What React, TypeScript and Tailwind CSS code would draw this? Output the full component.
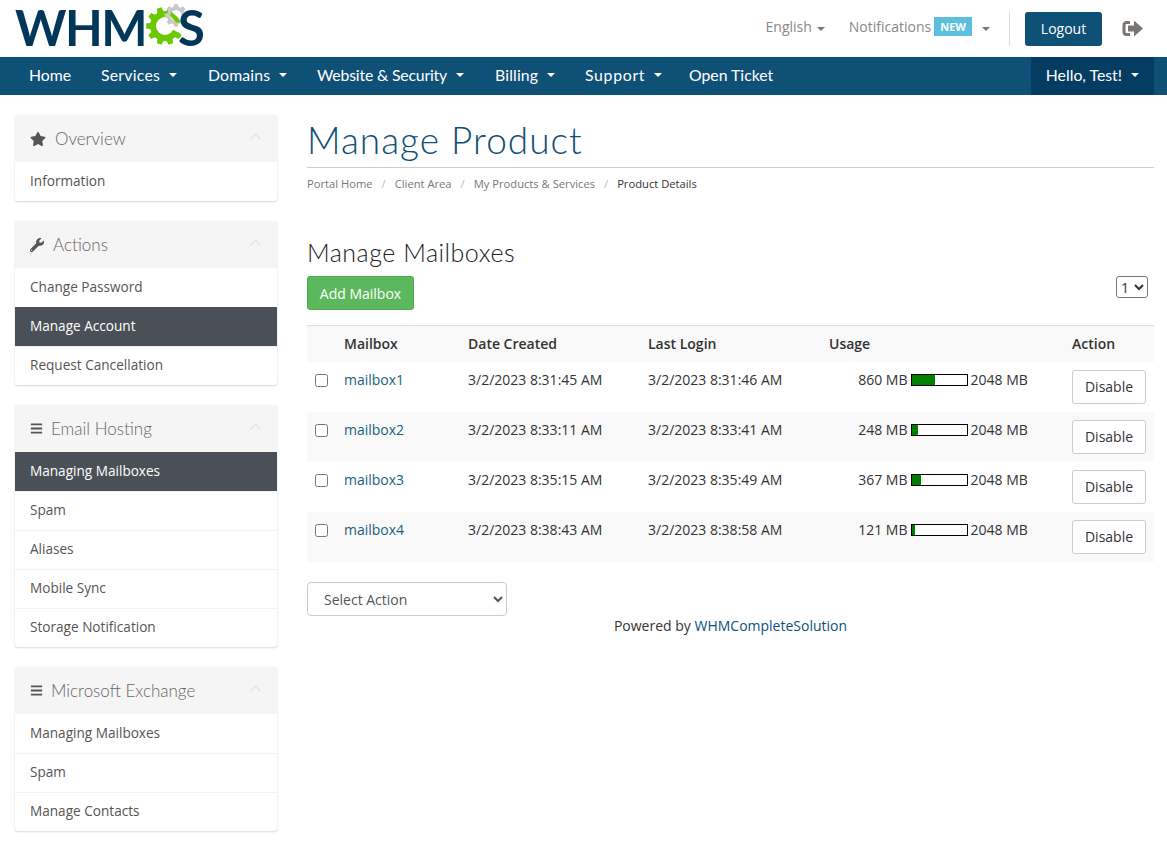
import React from 'react';
import { FaStar, FaWrench, FaBars, FaChevronUp } from 'react-icons/fa';

const gearPath = (cx: number, cy: number, outer: number, inner: number, teeth: number) => {
  const pts: string[] = [];
  const step = (Math.PI * 2) / teeth;
  for (let i = 0; i < teeth; i++) {
    const a = i * step;
    const corners: [number, number][] = [
      [inner, a - step * 0.34],
      [outer, a - step * 0.2],
      [outer, a + step * 0.2],
      [inner, a + step * 0.34],
    ];
    corners.forEach(([r, t]) => {
      pts.push(`${(cx + r * Math.cos(t)).toFixed(2)} ${(cy + r * Math.sin(t)).toFixed(2)}`);
    });
  }
  return `M${pts.join('L')}Z`;
};

const Caret = ({ className }: { className: string }) => (
  <span className={`inline-block w-0 h-0 border-x-[4px] border-x-transparent border-t-[4px] ${className}`} />
);

const Logo = () => (
  <div className="flex items-center h-[57px] pl-[15px] pb-[3px] text-[#03375a] text-[49px] font-bold leading-none font-['Lato','sans-serif']">
    <span className="tracking-[-1.5px]">WHM</span>
    <svg width="42" height="44" viewBox="0 0 42 44" className="-mt-[8px] shrink-0">
      <path d={gearPath(19, 25, 19, 15, 10)} fill="#6cc800" />
      <circle cx="19" cy="25" r="9" fill="#fff" />
      <path d="M19 25 L42 8 L42 36 Z" fill="#fff" />
      <path d={gearPath(30, 14.5, 11.5, 9, 8)} fill="#c9c9c9" />
      <circle cx="30" cy="14.5" r="5.5" fill="#fff" />
      <path d="M25 10.5 L32 16.5 L35 21.5 L30 21.5 L24 14.5 Z" fill="#6cc800" />
    </svg>
    <span className="-ml-[10px]">S</span>
  </div>
);

const navItems = [
  { label: 'Home', caret: false, cls: 'w-[72px]' },
  { label: 'Services', caret: true, cls: 'w-[107px] tracking-[0.25px]' },
  { label: 'Domains', caret: true, cls: 'w-[109px] tracking-[0.15px]' },
  { label: 'Website & Security', caret: true, cls: 'w-[178px] tracking-[-0.17px]' },
  { label: 'Billing', caret: true, cls: 'w-[90px] tracking-[0.15px]' },
  { label: 'Support', caret: true, cls: 'w-[104px] tracking-[0.7px]' },
  { label: 'Open Ticket', caret: false, cls: 'w-[112px]' },
];

type Panel = {
  title: string;
  icon: React.ReactNode;
  items: string[];
  active?: string;
};

const panels: Panel[] = [
  { title: 'Overview', icon: <FaStar className="w-[16px] h-[16px] mr-[9px]" />, items: ['Information'] },
  {
    title: 'Actions',
    icon: <FaWrench className="w-[14px] h-[14px] mr-[9px]" />,
    items: ['Change Password', 'Manage Account', 'Request Cancellation'],
    active: 'Manage Account',
  },
  {
    title: 'Email Hosting',
    icon: <FaBars className="w-[13px] h-[13px] mr-[8px]" />,
    items: ['Managing Mailboxes', 'Spam', 'Aliases', 'Mobile Sync', 'Storage Notification'],
    active: 'Managing Mailboxes',
  },
  {
    title: 'Microsoft Exchange',
    icon: <FaBars className="w-[13px] h-[13px] mr-[8px]" />,
    items: ['Managing Mailboxes', 'Spam', 'Manage Contacts'],
  },
];

const mailboxes = [
  { name: 'mailbox1', created: '3/2/2023 8:31:45 AM', login: '3/2/2023 8:31:46 AM', used: 860 },
  { name: 'mailbox2', created: '3/2/2023 8:33:11 AM', login: '3/2/2023 8:33:41 AM', used: 248 },
  { name: 'mailbox3', created: '3/2/2023 8:35:15 AM', login: '3/2/2023 8:35:49 AM', used: 367 },
  { name: 'mailbox4', created: '3/2/2023 8:38:43 AM', login: '3/2/2023 8:38:58 AM', used: 121 },
];

const SidePanel = ({ panel }: { panel: Panel }) => (
  <div className="mb-[20px] bg-white rounded-[3px] shadow-[0_1px_2px_rgba(0,0,0,0.14),0_0_1px_rgba(0,0,0,0.12)] overflow-hidden">
    <div className="flex items-center h-[47px] bg-[#f5f5f5] px-[15px]">
      <span className="text-[#555] flex items-center">{panel.icon}</span>
      <span className="flex-1 text-[17px] font-light font-['Lato','sans-serif'] text-[#666]">{panel.title}</span>
      <FaChevronUp className="w-[13px] h-[13px] text-[#e8e8e8] -mt-[4px]" />
    </div>
    {panel.items.map((item, i) => (
      <div
        key={item}
        className={`h-[39px] pl-[15px] pb-[4px] flex items-center border-t text-[13.6px] ${
          item === panel.active
            ? 'bg-[#495057] text-white border-transparent'
            : `text-[#555] ${i > 0 ? 'border-[#f3f3f3]' : 'border-transparent'}`
        }`}
      >
        {item}
      </div>
    ))}
  </div>
);

export default function App() {
  return (
    <div className="h-[846px] overflow-hidden bg-white text-[14px] leading-[21px] text-[#333] font-['Open_Sans','sans-serif']">
      <header className="flex items-center justify-between h-[57px] pr-[24px]">
        <Logo />
        <div className="flex items-center text-[#888]">
          <span className="-mt-[5px]">English</span>
          <Caret className="border-t-[#777] ml-[5px] mr-[24px]" />
          <span className="-mt-[5px]">Notifications</span>
          <span className="ml-[3px] -mt-[4px] bg-[#5bc0de] text-white text-[11px] font-bold leading-[19px] h-[19px] px-[6px]">NEW</span>
          <Caret className="border-t-[#777] ml-[10px] mr-[19px]" />
          <span className="w-px h-[34px] bg-[#ddd] mr-[15px]" />
          <button className="h-[34px] w-[77px] bg-[#0f5077] text-white rounded-[3px] text-[14px]">Logout</button>
          <svg width="21" height="17" viewBox="0 0 21 17" className="ml-[20px] text-[#7a7472]" fill="currentColor">
            <path d="M8 2.5H4.5A2.5 2.5 0 0 0 2 5v7a2.5 2.5 0 0 0 2.5 2.5H8" fill="none" stroke="currentColor" strokeWidth="3" />
            <path d="M6 5.5h6V.5l9 8-9 8v-5H6Z" />
          </svg>
        </div>
      </header>

      <nav className="flex items-stretch justify-between h-[38px] bg-[#0f5077] pl-[14.5px] pr-[13px] text-white text-[15.8px] font-['Lato','sans-serif']">
        <div className="flex items-center pb-[3px]">
          {navItems.map((n) => (
            <span key={n.label} className={`flex items-center pl-[14.5px] ${n.cls}`}>
              {n.label}
              {n.caret && <Caret className="border-t-white ml-[9px] mt-[1px]" />}
            </span>
          ))}
        </div>
        <div className="flex items-center bg-[#053d62] px-[15px] pb-[3px]">
          Hello, Test!
          <Caret className="border-t-white ml-[9px] mt-[1px]" />
        </div>
      </nav>

      <div className="flex pt-[20px] px-[15px]">
        <aside className="w-[262px] shrink-0">
          {panels.map((p) => (
            <SidePanel key={p.title} panel={p} />
          ))}
        </aside>

        <main className="ml-[30px] w-[847px]">
          <h1 className="text-[37px] leading-[40px] mt-[5px] pb-[7px] tracking-[1px] border-b border-[#ccc] text-[#0f5077] font-light font-['Lato','sans-serif']">
            Manage Product
          </h1>
          <div className="flex items-center h-[17px] mt-[7px] text-[11.2px] text-[#777]">
            <span>Portal Home</span>
            <span className="mx-[9px] text-[#bbb]">/</span>
            <span>Client Area</span>
            <span className="mx-[9px] text-[#bbb]">/</span>
            <span>My Products &amp; Services</span>
            <span className="mx-[9px] text-[#bbb]">/</span>
            <span className="text-[#333]">Product Details</span>
          </div>

          <h2 className="mt-[45px] text-[25px] leading-[30px] tracking-[0.5px] font-['Lato','sans-serif'] font-light text-[#222]">
            Manage Mailboxes
          </h2>
          <div className="flex items-center justify-between mt-[9px] mb-[15px] pr-[6px]">
            <button className="h-[34px] w-[107px] bg-[#5cb85c] border border-[#4cae4c] text-white rounded-[3px] text-[14px]">
              Add Mailbox
            </button>
            <select className="h-[22px] w-[32px] -mt-[12px] border border-[#767676] rounded-[3px] text-[14px] bg-white">
              <option>1</option>
            </select>
          </div>

          <table className="w-full table-fixed border-t border-[#ddd] border-collapse">
            <colgroup>
              <col className="w-[29px]" />
              <col className="w-[124px]" />
              <col className="w-[180px]" />
              <col className="w-[180px]" />
              <col className="w-[244px]" />
              <col className="w-[90px]" />
            </colgroup>
            <thead>
              <tr className="bg-[#f9f9f9] h-[36px] text-left">
                <th />
                <th className="px-[8px] font-semibold">Mailbox</th>
                <th className="px-[8px] font-semibold">Date Created</th>
                <th className="px-[8px] font-semibold">Last Login</th>
                <th className="pl-[9px] pr-[7px] font-semibold">Usage</th>
                <th className="px-[8px] font-semibold">Action</th>
              </tr>
            </thead>
            <tbody>
              {mailboxes.map((m, i) => (
                <tr key={m.name} className={i % 2 === 1 ? 'bg-[#f9f9f9]' : ''}>
                  <td className="p-[8px] align-top">
                    <input type="checkbox" className="block w-[13px] h-[13px] mt-[4px] m-0" />
                  </td>
                  <td className="px-[8px] pt-[7px] align-top text-[#1a5f80]">{m.name}</td>
                  <td className="px-[8px] pt-[7px] align-top">{m.created}</td>
                  <td className="px-[8px] pt-[7px] align-top">{m.login}</td>
                  <td className="pl-[10px] pr-[8px] pt-[7px] align-top">
                    <div className="flex items-center justify-center">
                      <span>{m.used} MB</span>
                      <span className="w-[57px] h-[12px] mx-[3px] mt-[1px] border border-black bg-white box-border">
                        <span
                          className="block h-full bg-[#008000]"
                          style={{ width: `${(m.used / 2048) * 100}%` }}
                        />
                      </span>
                      <span>2048 MB</span>
                    </div>
                  </td>
                  <td className="p-[8px] align-top">
                    <button className="w-[74px] h-[34px] bg-white border border-[#ccc] rounded-[3px]">Disable</button>
                  </td>
                </tr>
              ))}
            </tbody>
          </table>

          <select className="block mt-[20px] w-[200px] h-[34px] pl-[12px] pt-[2px] bg-white border border-[#ccc] rounded-[4px] text-[14px] text-[#555]">
            <option>Select Action</option>
          </select>
          <p className="text-center mt-[-1px]">
            Powered by <span className="text-[#0f5077]">WHMCompleteSolution</span>
          </p>
        </main>
      </div>
    </div>
  );
}
